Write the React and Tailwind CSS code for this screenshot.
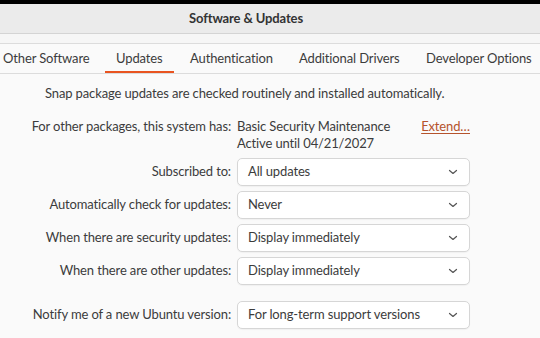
import React from 'react';

const tabs = [
  { label: 'Other Software', w: 'w-[113px]' },
  { label: 'Updates', w: 'w-[74px]', active: true },
  { label: 'Authentication', w: 'w-[109px]' },
  { label: 'Additional Drivers', w: 'w-[127px]' },
  { label: 'Developer Options', w: 'w-[114px]' },
];

const Chevron = () => (
  <svg width="10" height="6" viewBox="0 0 10 6" fill="none" stroke="#555" strokeWidth="1.2" strokeLinecap="round" strokeLinejoin="round">
    <path d="M1.5 1.5 L5 4.5 L8.5 1.5" />
  </svg>
);

const Select = ({ value }) => (
  <div className="flex h-[28px] w-[233px] items-center justify-between rounded-[5px] border border-[#d6d6d6] bg-white pl-[10px] pr-[11px] shadow-[0_1px_1px_rgba(0,0,0,0.04)]">
    <span>{value}</span>
    <Chevron />
  </div>
);

const Row = ({ label, value, className = '' }) => (
  <div className={`flex items-center ${className}`}>
    <div className="w-[237px] pr-[6px] text-right">{label}</div>
    <Select value={value} />
  </div>
);

export default function App() {
  return (
    <div
      className="flex h-[338px] w-[540px] flex-col overflow-hidden bg-[#fafafa] text-[13px] tracking-[-0.13px] text-[#3c3c3c]"
      style={{ fontFamily: 'Lato, "Noto Sans", sans-serif' }}
    >
      <div className="h-[4px] bg-black" />
      <div className="flex h-[30px] items-center justify-center border-b border-[#d4d4d4] bg-[#ebebeb] pr-[48px] font-bold text-[#333]">
        Software &amp; Updates
      </div>
      <div className="h-[10px] border-b border-[#dcdcdc] bg-[#f6f6f6]" />
      <div className="flex h-[30px] items-stretch whitespace-nowrap border-b border-[#dcdcdc] bg-[#fafafa] pl-[3px]">
        {tabs.map((t) => (
          <div key={t.label} className={`flex shrink-0 items-stretch ${t.w}`}>
            <div
              className={`flex items-center border-b-2 pt-[3px] ${
                t.active ? 'mx-[-11px] border-[#e95420] px-[11px]' : 'border-transparent'
              }`}
            >
              {t.label}
            </div>
          </div>
        ))}
      </div>

      <div className="pt-[10px]">
        <div className="pl-[45px]">Snap package updates are checked routinely and installed automatically.</div>

        <div className="mt-[14px] flex">
          <div className="w-[237px] pr-[6px] text-right leading-[17px]">For other packages, this system has:</div>
          <div className="flex w-[233px] justify-between leading-[17px]">
            <div>
              <div>Basic Security Maintenance</div>
              <div>Active until 04/21/2027</div>
            </div>
            <span className="text-[#b5532c] underline underline-offset-[2px]">Extend…</span>
          </div>
        </div>

        <div className="mt-[6px] flex flex-col gap-[5px]">
          <Row label="Subscribed to:" value="All updates" />
          <Row label="Automatically check for updates:" value="Never" />
          <Row label="When there are security updates:" value="Display immediately" />
          <Row label="When there are other updates:" value="Display immediately" />
        </div>

        <Row className="mt-[16px]" label="Notify me of a new Ubuntu version:" value="For long-term support versions" />
      </div>
    </div>
  );
}
